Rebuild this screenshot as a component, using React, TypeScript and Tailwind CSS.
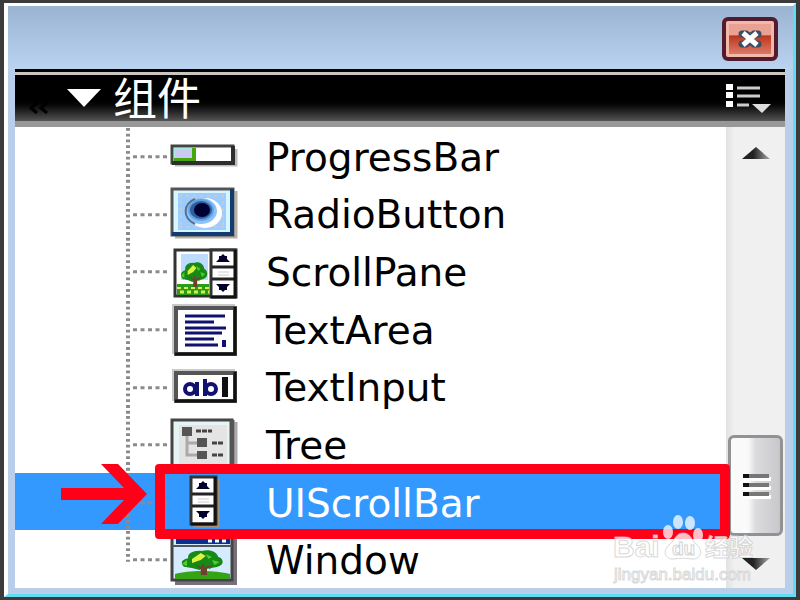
import { useState } from "react";
import type { ReactNode } from "react";

const Tree = () => (
    <g>
        <path d="M12 21c-4-1-7 0-8-4-1-4 3-5 5-6-1-5 5-8 11-7 6-2 12 1 13 6 4 1 5 7 1 9-3 2-6 1-8 3l-3-2-5 3z" fill="#168916" />
        <path d="M12 12l7-6 4 3-4 4-7 3z" fill="#d9f442" />
        <path d="M23 7l5 3-3 2zM8 13l-4 4 4 2zM28 13l6 2-4 3z" fill="#4ed02c" />
        <path d="M14 17l5 5v6h5v-6l5-4-7 2-1-4-2 4z" fill="#70402f" />
    </g>
);

// small vertical scroll bar, 28 x 50
const MiniScroll = () => (
    <g>
        <rect x="1" y="1" width="25" height="47" fill="#fff" stroke="#333" strokeWidth="3" />
        <path d="M2 18h23M2 30h23" stroke="#222" strokeWidth="3" />
        <path d="M25 1v47H1" fill="none" stroke="#111" strokeWidth="3" />
        <path d="M6 13h14l-3-3v-3h-2l-2-2-2 2h-2v3z" fill="#00002a" />
        <path d="M6 35h14l-3 3v3h-2l-2 2-2-2h-2v-3z" fill="#00002a" />
        <path d="M8 23h11M8 26h11" stroke="#ccc" strokeWidth="1" />
    </g>
);

const icons: Record<string, ReactNode> = {
    ProgressBar: (
        <g>
            <path d="M5 38h61V22" fill="none" stroke="#bbb" strokeWidth="3" />
            <rect x="2" y="19" width="61" height="17" fill="#fff" stroke="#444" strokeWidth="3" />
            <path d="M2 36h61V19" fill="none" stroke="#2e2e2e" strokeWidth="4" />
            <rect x="4" y="21" width="22" height="13" fill="#43a70d" />
            <rect x="4" y="21" width="18" height="10" fill="#c9c9f4" />
            <path d="M4 22h18M5 21v10" stroke="#a5e6dd" strokeWidth="2" />
        </g>
    ),
    RadioButton: (
        <g>
            <path d="M5 53h61V7" fill="none" stroke="#b9b1a9" strokeWidth="3" />
            <rect x="2" y="5" width="61" height="46" fill="#d7f6ff" stroke="#555" strokeWidth="3" />
            <path d="M2 50h60V5" fill="none" stroke="#123b70" strokeWidth="4" />
            <rect x="8" y="9" width="48" height="37" fill="#9dccff" />
            <path d="M9 12h46M9 43h46M11 10v34M53 10v34" stroke="#c3cbd6" strokeWidth="2" strokeDasharray="3 4" />
            <ellipse cx="35" cy="29" rx="17" ry="15" fill="#fff" />
            <ellipse cx="31" cy="27" rx="16" ry="13" fill="#8cc2fa" />
            <path d="M25 40c-13-6-12-20 0-25" fill="none" stroke="#5b6f88" strokeWidth="2" />
            <ellipse cx="31" cy="26" rx="13" ry="11" fill="#63a1e0" />
            <ellipse cx="31" cy="26" rx="11" ry="9" fill="#2b5f9e" />
            <ellipse cx="32" cy="26" rx="8" ry="7" fill="#000033" />
        </g>
    ),
    ScrollPane: (
        <g>
            <rect x="5" y="8" width="60" height="46" fill="#fff" stroke="#333" strokeWidth="3" />
            <rect x="11" y="12" width="27" height="26" fill="#bbdcff" />
            <rect x="7" y="42" width="32" height="11" fill="#2c9b19" />
            <path d="M7 46h32" stroke="#cfef54" strokeWidth="2" strokeDasharray="4 3" />
            <path d="M10 50h29" stroke="#cfef54" strokeWidth="3" strokeDasharray="4 3" />
            <g transform="translate(8 17) scale(.8 1)">
                <Tree />
            </g>
            <g transform="translate(40 7)">
                <MiniScroll />
            </g>
        </g>
    ),
    TextArea: (
        <g>
            <path d="M3 54V5h62" fill="none" stroke="#c9c9c9" strokeWidth="2" />
            <rect x="6" y="8" width="59" height="46" fill="#fff" stroke="#555" strokeWidth="4" />
            <path d="M5 54h60V7" fill="none" stroke="#111" strokeWidth="3" />
            <path d="M15 16h40M15 22h29M15 28h41M15 33h37M15 39h29M15 45h33" stroke="#11116f" strokeWidth="3" />
            <path d="M52 40h4v7h-4z" fill="#11116f" />
        </g>
    ),
    TextInput: (
        <g>
            <path d="M3 44V13h62" fill="none" stroke="#c9c9c9" strokeWidth="2" />
            <rect x="6" y="16" width="59" height="28" fill="#fff" stroke="#555" strokeWidth="4" />
            <path d="M5 44h60V15" fill="none" stroke="#111" strokeWidth="3" />
            <ellipse cx="20" cy="32" rx="5" ry="5" fill="none" stroke="#11116f" strokeWidth="4" />
            <path d="M27 25v14M35 22v17" stroke="#11116f" strokeWidth="4" />
            <ellipse cx="41" cy="32" rx="5" ry="5" fill="none" stroke="#11116f" strokeWidth="4" />
            <path d="M55 20v20" stroke="#111" strokeWidth="6" />
        </g>
    ),
    Tree: (
        <g>
            <path d="M66 7v51" stroke="#aaa" strokeWidth="3" />
            <path d="M2 58V5h60v53" fill="#e5f5f5" stroke="#444" strokeWidth="3" />
            <path d="M62 5v53" stroke="#555" strokeWidth="5" />
            <rect x="9" y="10" width="48" height="48" fill="#e4e4e4" />
            <path d="M17 20v20h12M17 28h12" fill="none" stroke="#aaa" strokeWidth="3" />
            <path d="M12 12h10v9H12zM27 23h10v9H27zM27 36h10v8H27z" fill="#555" />
            <path d="M26 16h16M42 28h12M42 40h12" stroke="#444" strokeWidth="3" strokeDasharray="5 1" />
        </g>
    ),
    UIScrollBar: (
        <g transform="translate(20 3)">
            <path d="M3 50h25V3" fill="none" stroke="#a89078" strokeWidth="3" />
            <MiniScroll />
        </g>
    ),
    Window: (
        <g>
            <path d="M5 53h60V3" fill="none" stroke="#777078" strokeWidth="4" />
            <rect x="2" y="0" width="60" height="50" fill="#d5ebff" stroke="#444" strokeWidth="3" />
            <rect x="6" y="0" width="54" height="14" fill="#08308e" />
            <path d="M38 11h4M45 11h4M52 11h4" stroke="#fff" strokeWidth="3" />
            <path d="M2 16h60" stroke="#555" strokeWidth="2" />
            <path d="M5 44c14-4 40-4 55 0v5H5z" fill="#34a416" />
            <g transform="translate(7 17) scale(1.25 1)">
                <Tree />
            </g>
        </g>
    ),
};

const items = [
    "ProgressBar",
    "RadioButton",
    "ScrollPane",
    "TextArea",
    "TextInput",
    "Tree",
    "UIScrollBar",
    "Window",
];

const Connector = ({ last }: { last: boolean }) => (
    <svg viewBox="0 0 46 58" preserveAspectRatio="none" className="w-[46px] h-full shrink-0" fill="none" stroke="#8b8b8b">
        <path d={last ? "M4 1v31" : "M4 1v57"} strokeWidth="4" strokeDasharray="2.8 3" />
        <path d="M9 30h35" strokeWidth="3" strokeDasharray="4 3.5" />
    </svg>
);

// Red frame and arrow pointing at the component to pick
const Callout = () => (
    <div className="pointer-events-none absolute z-10 left-[46px] -right-1 -top-[9px] -bottom-[9px] flex items-start">
        <svg viewBox="0 0 86 60" width="86" height="60" className="shrink-0">
            <path d="M0 24h63L40 0h17l29 30-29 30H40l23-24H0z" fill="#ff0018" />
        </svg>
        <div className="ml-2 flex-1 h-full border-10 border-[#ff0018] rounded-sm" />
    </div>
);

const Watermark = () => (
    <div className="pointer-events-none absolute right-10 bottom-3 z-20">
        <svg viewBox="0 0 150 76" width="150" height="76" fill="#fff" fillOpacity=".75" stroke="#c8c8c8" strokeOpacity=".7" strokeWidth="1">
            <text x="3" y="45" fontSize="30" fontWeight="bold" fontFamily='"Liberation Sans", sans-serif'>Bai</text>
            <g stroke="none">
                <ellipse cx="58" cy="20" rx="5" ry="7" />
                <ellipse cx="68" cy="10" rx="5" ry="7" />
                <ellipse cx="80" cy="11" rx="5" ry="7" />
                <ellipse cx="88" cy="23" rx="5" ry="7" />
            </g>
            <path d="M73 21c8 0 8 7 14 12 7 6 3 15-5 14-7-1-12-1-18 0-9 1-12-8-5-14 6-5 7-12 14-12z" />
            <text x="62" y="43" fontSize="19" fontWeight="bold" stroke="#bdbdbd" fontFamily='"Liberation Sans", sans-serif'>du</text>
            <text x="95" y="44" fontSize="24" fontWeight="bold" fontFamily='"Noto Sans CJK SC", sans-serif'>经验</text>
            <text x="4" y="68" fontSize="17" fontFamily='"Liberation Sans", sans-serif'>jingyan.baidu.com</text>
        </svg>
    </div>
);

export default function App() {
    const [selected, setSelected] = useState("UIScrollBar");
    const [open, setOpen] = useState(true);

    return (
        <main className="relative min-h-screen flex flex-col bg-[#3b3b3b] pt-[3px] pr-1 pb-[3px] pl-1 font-['DejaVu_Sans',sans-serif]">
            <div className="flex-1 flex flex-col border-t-3 border-l-4 border-r-3 border-b-3 border-t-white border-l-white border-r-[#62dcf5] border-b-[#62dcf5] bg-[#b9cfe9] pl-[7px] pr-2 pb-[6px]">
                {/* TITLE BAR */}
                <header className="-ml-[7px] -mr-2 h-[63px] shrink-0 flex justify-end items-start bg-linear-to-b from-[#99b3d0] to-[#bad3f0] pt-[11px] pr-[15px]">
                    <button
                        aria-label="Close"
                        className="w-14 h-11 rounded-md border-4 border-[#521c2c] bg-[#f3b7ab] p-[3px]"
                    >
                        <span className="flex w-full h-full items-center justify-center bg-linear-to-b from-[#e9a193] from-35% via-[#bd351c] via-40% to-[#dc7966]">
                            <svg viewBox="0 0 28 20" width="28" height="20" fill="none">
                                <path d="M6 5h4l4 3 4-3h4M6 15h4l4-3 4 3h4M10 6l8 8M18 6l-8 8" stroke="#3c4d61" strokeWidth="7" strokeLinecap="round" />
                                <path d="M7 4l14 12M21 4L7 16" stroke="#fff" strokeWidth="5" />
                            </svg>
                        </span>
                    </button>
                </header>

                {/* PANEL HEADER */}
                <div className="shrink-0 bg-black pt-[3px]">
                    <div className="h-[3px] bg-[#c9c5c0]" />
                    <div className="h-[52px] flex items-center border-b-6 border-[#989898] bg-linear-to-b from-black from-50% to-[#555] pl-3 pr-[14px] text-white">
                        <svg viewBox="0 0 24 14" width="24" height="14" className="mt-5" fill="none" stroke="#000" strokeWidth="3">
                            <path d="M10 2L4 7l6 5M20 2l-6 5 6 5" />
                        </svg>
                        <button
                            aria-label="Toggle panel"
                            aria-expanded={open}
                            onClick={() => setOpen(!open)}
                            className="ml-4"
                        >
                            <svg viewBox="0 0 34 18" width="34" height="18" fill="#fff">
                                <path d="M0 0h34L17 18z" />
                            </svg>
                        </button>
                        <h1 className="ml-3 text-[44px] leading-[44px] -mt-1 font-['Noto_Sans_CJK_SC',sans-serif]">组件</h1>
                        <button aria-label="Panel options" className="ml-auto">
                            <svg viewBox="0 0 46 30" width="46" height="30">
                                <path d="M1 1h7v6H1zM1 9h7v6H1zM1 18h7v6H1z" fill="#fff" />
                                <path d="M12 5h23M12 13h23M12 22h12" stroke="#ccc" strokeWidth="3" />
                                <path d="M27 21h19l-9 9z" fill="#ddd" />
                            </svg>
                        </button>
                    </div>
                </div>

                {/* COMPONENT LIST */}
                {open && (
                    <div className="flex-1 flex bg-white">
                        <ul className="flex-1 flex flex-col">
                            {items.map((item, i) => (
                                <li key={item} className="relative flex-1 basis-0 min-h-[57px]">
                                    <button
                                        onClick={() => setSelected(item)}
                                        className={`w-full h-full flex items-center pl-[109px] text-left ${selected === item ? "bg-[#3399ff] text-white" : "text-black"}`}
                                    >
                                        <Connector last={i === items.length - 1} />
                                        <svg viewBox="0 0 68 58" width="68" height="58" className="shrink-0 -my-1">
                                            {icons[item]}
                                        </svg>
                                        <span className="ml-7 pt-1 text-[39px] leading-[46px]">{item}</span>
                                    </button>
                                    {item === "UIScrollBar" && <Callout />}
                                </li>
                            ))}
                        </ul>

                        {/* SCROLL BAR */}
                        <div className="w-[59px] shrink-0 flex flex-col items-center bg-linear-to-r from-[#e2e2e2] to-[#f0f0f0] to-15% pt-5 pb-[17px]">
                            <button aria-label="Scroll up">
                                <svg viewBox="0 0 28 13" width="28" height="13">
                                    <defs>
                                        <linearGradient id="arrow">
                                            <stop offset=".4" stopColor="#222" />
                                            <stop offset="1" stopColor="#aaa" />
                                        </linearGradient>
                                    </defs>
                                    <path d="M0 12L14 0l14 12z" fill="url(#arrow)" />
                                </svg>
                            </button>
                            <button
                                aria-label="Scroll position"
                                className="mt-auto mb-[22px] w-[55px] h-[101px] flex items-center justify-center rounded-md border-3 border-[#929292] bg-linear-to-r from-[#fafafa] from-35% via-[#dcdcdf] via-50% to-[#c8c8cc]"
                            >
                                <svg viewBox="0 0 30 26" width="30" height="26" strokeWidth="4">
                                    <path d="M2 6h28M2 15h28M2 24h28" stroke="#fff" />
                                    <path d="M2 3h26M2 12h26M2 21h26" stroke="#777" />
                                    <path d="M2 3h6M2 12h6M2 21h6" stroke="#111" />
                                </svg>
                            </button>
                            <button aria-label="Scroll down">
                                <svg viewBox="0 0 28 13" width="28" height="13">
                                    <path d="M0 0h28L14 12z" fill="url(#arrow)" />
                                </svg>
                            </button>
                        </div>
                    </div>
                )}
            </div>
            <Watermark />
        </main>
    );
}
